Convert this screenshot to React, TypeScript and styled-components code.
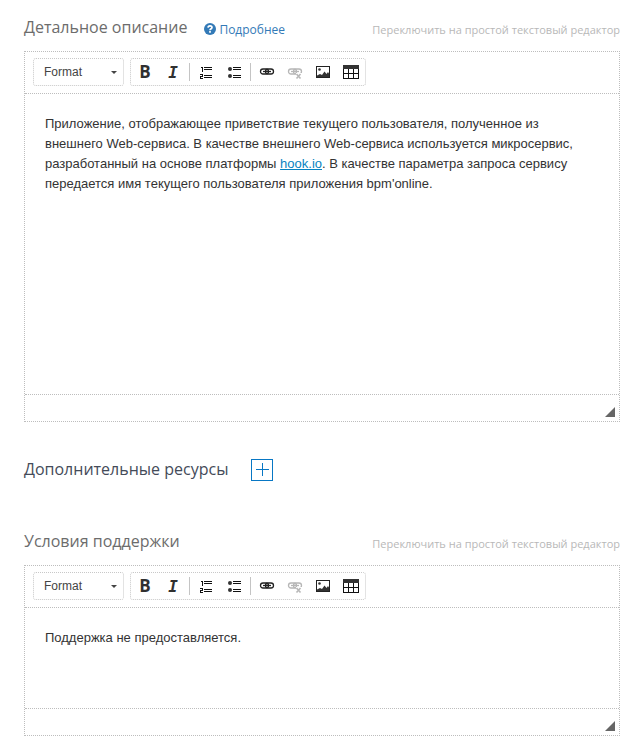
import React from "react";
import styled, { createGlobalStyle } from "styled-components";

const Global = createGlobalStyle`
  * { box-sizing: border-box; }
  body { margin: 0; background: #fff; font-family: "Open Sans", sans-serif; }
`;

const Page = styled.main`
  width: 643px;
  height: 755px;
  padding: 0 23px 0 24px;
  overflow: hidden;
`;

const Header = styled.header<{ $height: number; $top: number }>`
  display: flex;
  height: ${(p) => p.$height}px;
  padding-top: ${(p) => p.$top}px;
  align-items: flex-start;
`;

const Title = styled.h2<{ $dark?: boolean }>`
  margin: 0;
  font-size: 16px;
  font-weight: 400;
  line-height: 22px;
  white-space: nowrap;
  color: ${(p) => (p.$dark ? "#444b59" : "#6c6c6c")};
`;

const More = styled.a`
  display: flex;
  align-items: center;
  gap: 3px;
  margin: 5px 0 0 17px;
  font-size: 12px;
  line-height: 17px;
  color: #337ab7;
  svg { margin-top: -1px; }
`;

const Switch = styled.span<{ $top: number }>`
  margin: ${(p) => p.$top}px 0 0 auto;
  font-size: 11px;
  line-height: 16px;
  white-space: nowrap;
  color: #b8b8b8;
`;

const Editor = styled.section<{ $height: number }>`
  display: flex;
  flex-direction: column;
  height: ${(p) => p.$height}px;
  border: 1px dotted #bdbdbd;
  font-family: "Liberation Sans", Arial, sans-serif;
`;

const Toolbar = styled.div`
  display: flex;
  gap: 6px;
  height: 42px;
  padding: 6px 8px 7px;
  border-bottom: 1px dotted #bdbdbd;
`;

const FormatSelect = styled.div`
  display: flex;
  align-items: center;
  justify-content: space-between;
  width: 91px;
  height: 28px;
  padding: 0 6px 0 10px;
  border: 1px dotted #c8c8c8;
  border-radius: 3px;
  font-size: 12px;
  color: #444;
`;

const Caret = styled.i`
  border: 3px solid transparent;
  border-top-color: #444;
  border-bottom: 0;
`;

const Tools = styled.div`
  display: flex;
  align-items: center;
  width: 236px;
  height: 28px;
  border: 1px dotted #c8c8c8;
  border-radius: 3px;
`;

const Tool = styled.span<{ $faded?: boolean }>`
  display: flex;
  flex: 0 0 28px;
  align-items: center;
  justify-content: center;
  height: 26px;
  color: #222;
  opacity: ${(p) => (p.$faded ? 0.32 : 1)};
`;

const Glyph = styled.span<{ $italic?: boolean }>`
  font: ${(p) =>
    p.$italic
      ? 'italic 700 16px/16px "DejaVu Sans Mono", monospace'
      : '700 17px/16px "Open Sans", sans-serif'};
  padding-top: ${(p) => (p.$italic ? 2 : 0)}px;
  color: #303030;
`;

const Separator = styled.span`
  flex: 0 0 1px;
  height: 18px;
  margin: 0 2px;
  background: #c4c4c4;
`;

const Content = styled.div`
  flex: 1;
  padding: 20px;
  font-size: 13px;
  line-height: 20px;
  color: #333;
  p { margin: 0; white-space: nowrap; }
  a { color: #0782c1; text-decoration: underline; }
`;

const Footer = styled.footer`
  display: flex;
  align-items: flex-end;
  justify-content: flex-end;
  height: 27px;
  padding: 0 4px 4px;
  border-top: 1px dotted #bdbdbd;
`;

const Resources = styled.section`
  display: flex;
  height: 107px;
  padding-top: 36px;
  align-items: flex-start;
`;

const AddButton = styled.button`
  display: block;
  width: 22px;
  height: 22px;
  margin: 1px 0 0 23px;
  padding: 0;
  border: 1px solid #0877c4;
  background: #fff;
  svg { display: block; }
`;

const Icon = ({ children }: { children: React.ReactNode }) => (
  <svg width="16" height="16" viewBox="0 0 16 16" shapeRendering="crispEdges">{children}</svg>
);

const NumberedIcon = () => (
  <Icon>
    <path fill="#111" d="M3 3h2v5H4V4H3zM2 10h3v3H3v1h2v1H2v-3h2v-1H2zM6 3h8v1H6zM6 5h8v1H6zM6 11h8v1H6zM6 13h8v1H6z" />
  </Icon>
);
const BulletIcon = () => (
  <Icon>
    <g fill="#333" shapeRendering="auto"><circle cx="4" cy="5" r="2" /><circle cx="4" cy="12" r="2" /></g>
    <path fill="#111" d="M7 3h8v1H7zM7 5h8v1H7zM7 11h8v1H7zM7 13h8v1H7z" />
  </Icon>
);
const ChainShapes = () => (
  <g fill="none" stroke="#222" strokeWidth="1.3" shapeRendering="auto">
    <rect x="1.500" y="5" width="8" height="5" rx="2.500" />
    <rect x="6.500" y="5" width="8" height="5" rx="2.500" />
    <path d="M4 7.500h8" />
  </g>
);
const LinkIcon = () => <Icon><ChainShapes /></Icon>;
const UnlinkIcon = () => (
  <Icon>
    <ChainShapes />
    <path d="M9 9h6v6H9z" fill="#fff" />
    <path d="M9.500 10l4 4.500M13.500 10l-4 4.500" stroke="#222" strokeWidth="1.600" shapeRendering="auto" />
  </Icon>
);
const ImageIcon = () => (
  <Icon>
    <path d="M1.500 2.500h13v11h-13z" fill="#fff" stroke="#222" />
    <path shapeRendering="auto" fill="#333" d="M2 13v-1.500l3-1.500 2 1 2.500-3.500L11.500 10l1.500-2 1 1.500V13z" />
    <circle cx="4.500" cy="5.500" r="1.300" fill="#333" shapeRendering="auto" />
  </Icon>
);
const TableIcon = () => (
  <Icon>
    <path fill="#333" d="M0 1h16v4H0z" />
    <path fill="none" stroke="#111" d="M.5 5v9.500h15V5M0 9.500h16M5.500 5v9M10.500 5v9" />
  </Icon>
);

const RichEditor = ({ height, children }: { height: number; children: React.ReactNode }) => (
  <Editor $height={height}>
    <Toolbar>
      <FormatSelect>Format<Caret /></FormatSelect>
      <Tools>
        <Tool><Glyph>B</Glyph></Tool>
        <Tool><Glyph $italic>I</Glyph></Tool>
        <Separator />
        <Tool><NumberedIcon /></Tool>
        <Tool><BulletIcon /></Tool>
        <Separator />
        <Tool><LinkIcon /></Tool>
        <Tool $faded><UnlinkIcon /></Tool>
        <Tool><ImageIcon /></Tool>
        <Tool><TableIcon /></Tool>
      </Tools>
    </Toolbar>
    <Content>{children}</Content>
    <Footer>
      <svg width="10" height="10" viewBox="0 0 10 10"><path d="M10 0v10H0z" fill="#666" /></svg>
    </Footer>
  </Editor>
);

export default function App() {
  return (
    <>
      <Global />
      <Page>
        <Header $height={51} $top={16}>
          <Title>Детальное описание</Title>
          <More>
            <svg width="12" height="12" viewBox="0 0 12 12">
              <circle cx="6" cy="6" r="6" fill="#337ab7" />
              <path d="M4 4.600C4.200 2.200 8 2.300 8 4.500 8 5.700 6 5.700 6 7.200M6 8.100v1.700" stroke="#fff" strokeWidth="1.700" fill="none" />
            </svg>
            Подробнее
          </More>
          <Switch $top={6}>Переключить на простой текстовый редактор</Switch>
        </Header>
        <RichEditor height={371}>
          <p>Приложение, отображающее приветствие текущего пользователя, полученное из</p>
          <p>внешнего Web-сервиса. В качестве внешнего Web-сервиса используется микросервис,</p>
          <p>разработанный на основе платформы <a>hook.io</a>. В качестве параметра запроса сервису</p>
          <p>передается имя текущего пользователя приложения bpm'online.</p>
        </RichEditor>
        <Resources>
          <Title $dark>Дополнительные ресурсы</Title>
          <AddButton aria-label="Добавить">
            <svg width="20" height="20" viewBox="0 0 20 20" shapeRendering="crispEdges"><path d="M4 9.500h13M10.500 3v13" stroke="#0877c4" /></svg>
          </AddButton>
        </Resources>
        <Header $height={36} $top={1}>
          <Title>Условия поддержки</Title>
          <Switch $top={6}>Переключить на простой текстовый редактор</Switch>
        </Header>
        <RichEditor height={171}>
          <p>Поддержка не предоставляется.</p>
        </RichEditor>
      </Page>
    </>
  );
}
